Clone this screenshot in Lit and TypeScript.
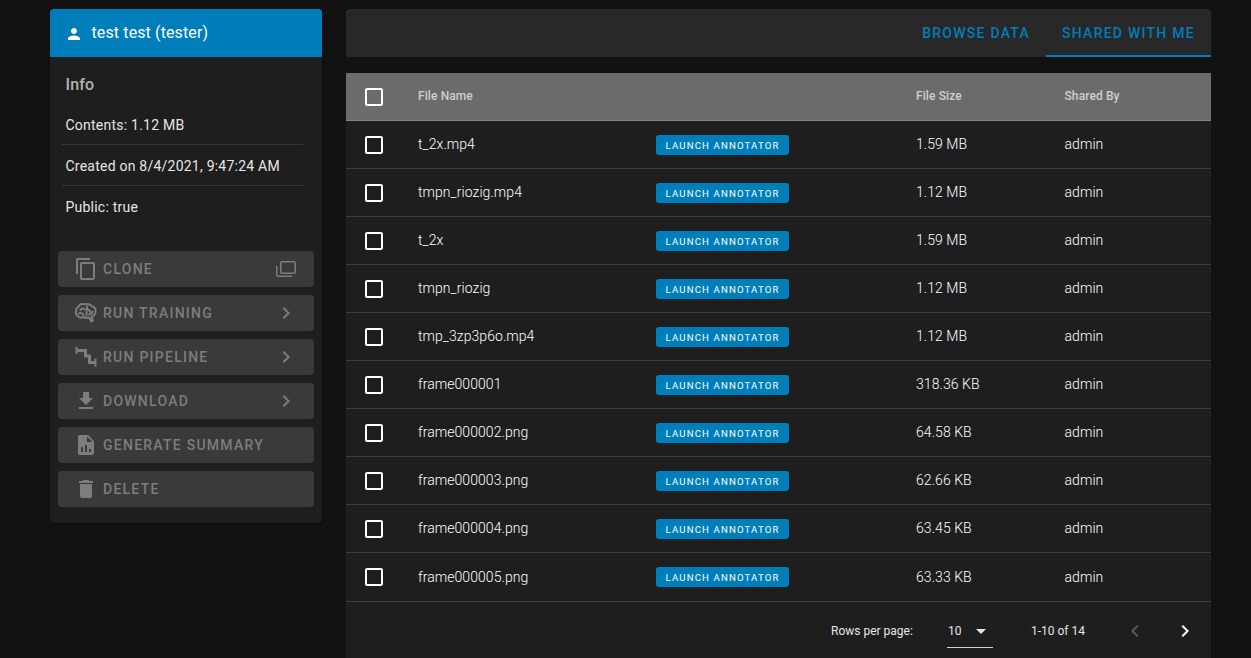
import { LitElement, html, css, svg } from "lit";
import { customElement } from "lit/decorators.js";

const icon = (d: string, cls = "ic") => html`<svg class=${cls} viewBox="0 0 24 24" fill="currentColor">${svg`<path d=${d}></path>`}</svg>`;

const brain = html`<svg class="ic" viewBox="0 0 24 24" fill="none" stroke="currentColor" stroke-width="2" stroke-linecap="round" stroke-linejoin="round">${svg`
  <path d="M9 3C7 2.700 5 4 4.500 6 2.500 6.500 1.700 8.500 2.300 10 1.300 11.500 1.800 14 4 15c1 2 3.500 2 5 1 2 1 4 1 6 .5l2.500 4 1.500-1-1.500-3.500c2.500-1 4.500-3.500 4-6 .5-2-1-4.500-3.500-4.500C16.500 3.500 13 2.300 11 3.300 10.500 3.300 9.500 3.200 9 3z"></path>
  <path d="M6.500 9C7.500 7 10 7 11 8.500M13 5.500v3c2 0 3 1 3 2.500M5 12.500c2-1 4 0 4.500 1.500M12.500 10.500V14M18.500 10.500c0 2.500-1.500 3-3.500 3"></path>`}</svg>`;

const pipe = html`<svg class="ic" viewBox="0 0 24 24" fill="none" stroke="currentColor" stroke-width="3" stroke-linejoin="miter">${svg`
  <path d="M2 5.500H11.500V11H15.500V17.500H21"></path>
  <path stroke-width="2" d="M2.500 1.700V9M21.500 13.500V21.700"></path>`}</svg>`;

const P = {
  person: "M12 12c2.21 0 4-1.79 4-4s-1.79-4-4-4-4 1.79-4 4 1.79 4 4 4zm0 2c-2.67 0-8 1.34-8 4v2h16v-2c0-2.66-5.33-4-8-4z",
  copy: "M16 1H4c-1.1 0-2 .9-2 2v14h2V3h12V1zm3 4H8c-1.1 0-2 .9-2 2v14c0 1.1.9 2 2 2h11c1.1 0 2-.9 2-2V7c0-1.1-.9-2-2-2zm0 16H8V7h11v14z",
  lib: "M20 4H8C6.900 4 6 4.900 6 6v9c0 1.100.9 2 2 2h12c1.100 0 2-.9 2-2V6c0-1.100-.9-2-2-2zm.5 11.500h-13v-10h13v10zM2 9v9c0 1.100.9 2 2 2h14v-1.500H3.500V9z",
  chev: "M10 6 8.590 7.410 13.170 12l-4.580 4.590L10 18l6-6z",
  back: "M15.410 7.410 14 6l-6 6 6 6 1.410-1.410L10.830 12z",
  dl: "M19 9h-4V3H9v6H5l7 7 7-7zM5 18v2h14v-2H5z",
  sum: "M14 2H6c-1.100 0-2 .9-2 2v16c0 1.100.9 2 2 2h12c1.100 0 2-.9 2-2V8l-6-6zm-5 17H7v-5h2v5zm4 0h-2v-7h2v7zm4 0h-2v-3h2v3zM13 9V3.500L18.500 9H13z",
  del: "M6 19c0 1.100.9 2 2 2h8c1.100 0 2-.9 2-2V7H6v12zM19 4h-3.500l-1-1h-5l-1 1H5v2h14V4z",
  box: "M19 5v14H5V5h14m0-2H5c-1.100 0-2 .9-2 2v14c0 1.100.9 2 2 2h14c1.100 0 2-.9 2-2V5c0-1.100-.9-2-2-2z",
};

const rows = [
  ["t_2x.mp4", "1.59 MB"], ["tmpn_riozig.mp4", "1.12 MB"], ["t_2x", "1.59 MB"], ["tmpn_riozig", "1.12 MB"],
  ["tmp_3zp3p6o.mp4", "1.12 MB"], ["frame000001", "318.36 KB"], ["frame000002.png", "64.58 KB"],
  ["frame000003.png", "62.66 KB"], ["frame000004.png", "63.45 KB"], ["frame000005.png", "63.33 KB"],
];

const actions = [
  ["CLONE", icon(P.copy), icon(P.lib, "ic end")], ["RUN TRAINING", brain, icon(P.chev, "ic end")], ["RUN PIPELINE", pipe, icon(P.chev, "ic end")],
  ["DOWNLOAD", icon(P.dl), icon(P.chev, "ic end")], ["GENERATE SUMMARY", icon(P.sum), ""], ["DELETE", icon(P.del), ""],
];

@customElement("app-root")
export class AppRoot extends LitElement {
  static styles = css`
    :host { display: block; height: 658px; overflow: hidden; background: #121212; font-family: Roboto, "Liberation Sans", sans-serif; color: #fff; }
    .page { display: flex; align-items: flex-start; gap: 24px; padding: 9px 40px 0 50px; }
    .side { width: 272px; flex: none; background: #1e1e1e; border-radius: 4px; overflow: hidden; padding-bottom: 16px; box-shadow: 0 1px 3px rgba(0,0,0,.4); }
    .user { height: 48px; background: #007dbb; display: flex; align-items: center; padding-left: 15px; gap: 8.500px; font-size: 16px; letter-spacing: .12px; }
    .user span { padding-bottom: 2px; }
    .user .ic { width: 18px; height: 18px; margin-top: 2px; }
    .info { padding: 16px 15.500px 0; }
    .info h3 { margin: 0; font-size: 16px; font-weight: 500; line-height: 24px; color: #b3b3b3; letter-spacing: .1px; padding-bottom: 7px; }
    .li { font-size: 14px; line-height: 20px; padding: 11px 0 9px; letter-spacing: .23px; color: #e6e6e6; }
    .li + .li { border-top: 1px solid #383838; margin-left: -3.500px; margin-right: 3.500px; padding-left: 3.500px; }
    .actions { display: flex; flex-direction: column; gap: 8px; margin: 25px 8px 0; }
    .act { height: 36px; background: #3a3a3a; border-radius: 4px; display: flex; align-items: center; padding: 0 16px 0 15.500px; color: #7d7d7d; font-size: 14px; font-weight: 500; letter-spacing: 1.250px; }
    .act .ic { width: 24px; height: 24px; flex: none; margin-right: 5.500px; }
    .act .lab { flex: 1; }
    .act .end { margin: 0; }
    .main { width: 865px; flex: none; display: flex; flex-direction: column; gap: 16px; }
    .tabs { height: 48px; background: #282828; border-radius: 4px 4px 0 0; display: flex; justify-content: flex-end; color: #007dbb; font-size: 14px; font-weight: 500; letter-spacing: 1.250px; }
    .tab { display: flex; align-items: center; justify-content: center; padding: 0 16px; }
    .tab.on { width: 165px; box-sizing: border-box; border-bottom: 2px solid #007dbb; padding-top: 2px; }
    .table { background: #1e1e1e; }
    .row { display: grid; grid-template-columns: 72px 238px 260px 148.500px 1fr; align-items: center; height: 48px; box-sizing: border-box; border-bottom: 1px solid #3d3d3d; font-size: 14px; font-weight: 300; letter-spacing: .06px; color: #fff; }
    .row.last { height: 49px; }
    .row .tx { padding-bottom: 1px; }
    .row.last .tx { padding-bottom: 0; }
    .row.head { background: #6b6b6b; border-bottom-color: #858585; font-size: 12px; font-weight: 500; color: #cfcfcf; letter-spacing: .1px; }
    .row.head .tx { padding-bottom: 2px; }
    .cb { width: 24px; height: 24px; margin-left: 16px; color: #fff; display: block; }
    .btn { width: 133px; height: 20px; background: #007dbb; border-radius: 3px; color: #fff; font-size: 9.600px; font-weight: 400; letter-spacing: 1.150px; padding-top: 1px; box-sizing: border-box; display: flex; align-items: center; justify-content: center; }
    .foot { height: 57px; display: flex; align-items: center; font-size: 12px; color: #e6e6e6; }
    .foot .rpp { margin-left: 485px; width: 116px; }
    .sel { width: 46px; height: 32px; box-sizing: border-box; border-bottom: 1px solid #d0d0d0; display: flex; align-items: center; position: relative; top: 1px; }
    .sel span { flex: 1; padding-left: 1px; }
    .sel .ic { width: 24px; height: 24px; }
    .rng { margin-left: 38px; width: 92px; }
    .nav { width: 24px; height: 24px; display: block; }
    .nav.off { color: #5a5a5a; margin-right: 26px; }
    .nav.next { color: #fff; }
  `;

  render() {
    return html`<div class="page">
      <aside class="side">
        <div class="user">${icon(P.person)}<span>test test (tester)</span></div>
        <div class="info">
          <h3>Info</h3>
          <div class="li">Contents: 1.12 MB</div>
          <div class="li">Created on 8/4/2021, 9:47:24 AM</div>
          <div class="li">Public: true</div>
        </div>
        <div class="actions">
          ${actions.map(([l, i, e]) => html`<div class="act">${i}<span class="lab">${l}</span>${e}</div>`)}
        </div>
      </aside>
      <main class="main">
        <div class="tabs"><div class="tab">BROWSE DATA</div><div class="tab on">SHARED WITH ME</div></div>
        <div class="table">
          <div class="row head">${icon(P.box, "cb")}<div class="tx">File Name</div><div></div><div class="tx">File Size</div><div class="tx">Shared By</div></div>
          ${rows.map(([n, s], i) => html`<div class="row ${i === 9 ? "last" : ""}">${icon(P.box, "cb")}<div class="tx">${n}</div><div><div class="btn">LAUNCH ANNOTATOR</div></div><div class="tx">${s}</div><div class="tx">admin</div></div>`)}
          <div class="foot">
            <div class="rpp">Rows per page:</div>
            <div class="sel"><span>10</span><svg class="ic" viewBox="0 0 24 24" fill="currentColor"><path d="M7 10l5 5 5-5z"></path></svg></div>
            <div class="rng">1-10 of 14</div>
            ${icon(P.back, "nav off")}${icon(P.chev, "nav next")}
          </div>
        </div>
      </main>
    </div>`;
  }
}
